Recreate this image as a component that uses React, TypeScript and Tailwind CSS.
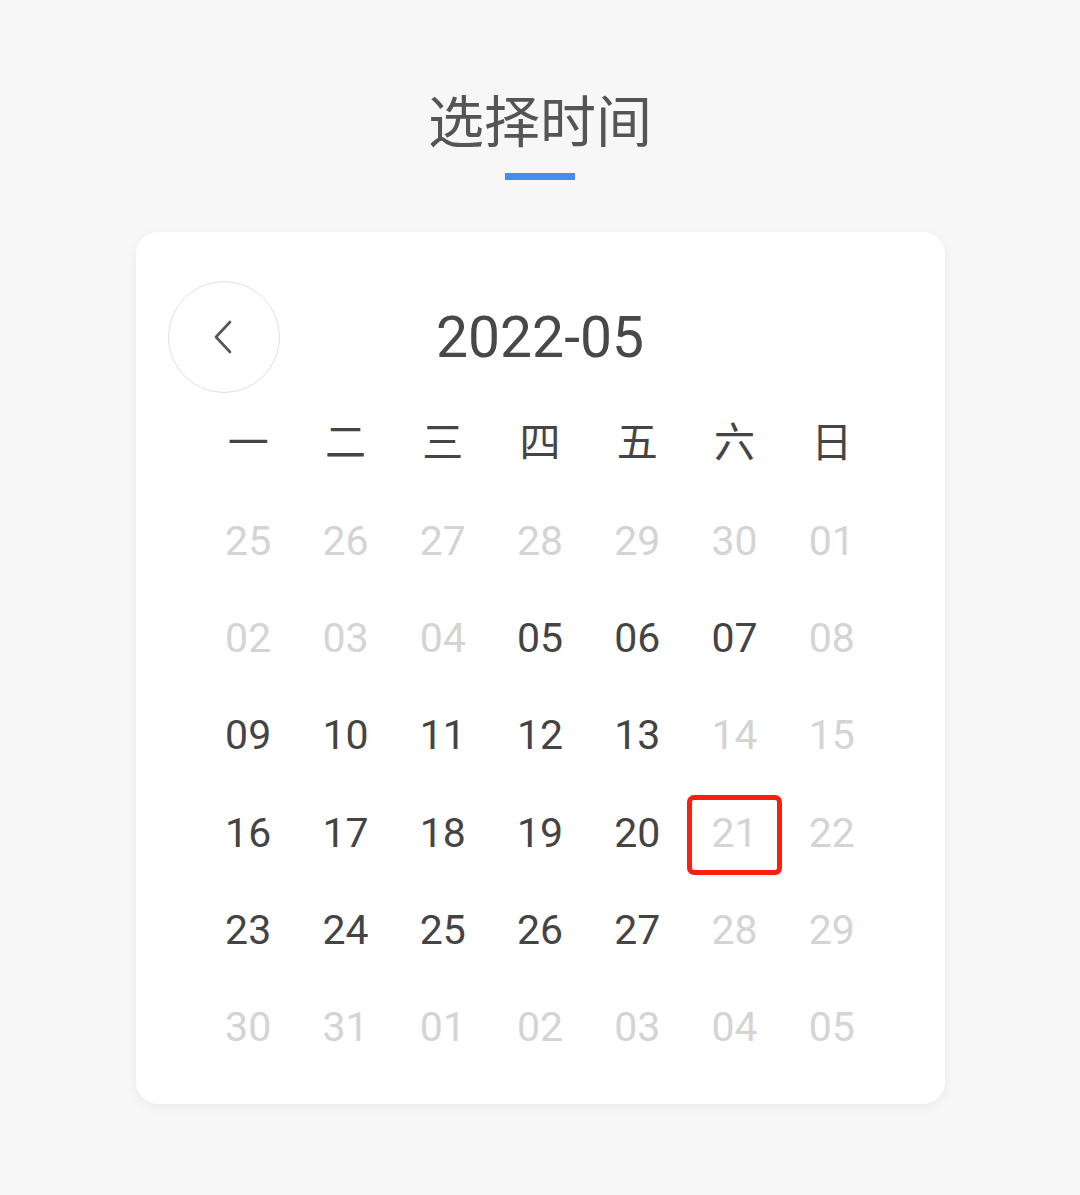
import React from "react";

type Day = { label: string; active: boolean; marked?: boolean };

const weekdays = ["一", "二", "三", "四", "五", "六", "日"];

// which days of the month are selectable (dark)
const activeDays = new Set([5, 6, 7, 9, 10, 11, 12, 13, 16, 17, 18, 19, 20, 23, 24, 25, 26, 27]);

const buildDays = (): Day[] => {
  const days: Day[] = [];
  [25, 26, 27, 28, 29, 30].forEach((d) => days.push({ label: String(d), active: false }));
  for (let d = 1; d <= 31; d++) {
    days.push({
      label: String(d).padStart(2, "0"),
      active: activeDays.has(d),
      marked: d === 21,
    });
  }
  [1, 2, 3, 4, 5].forEach((d) => days.push({ label: String(d).padStart(2, "0"), active: false }));
  return days;
};

const ChevronLeft = () => (
  <svg width="20" height="34" viewBox="0 0 20 34" fill="none">
    <path d="M17 2 L3 17 L17 32" stroke="#555555" strokeWidth="2.6" strokeLinecap="round" strokeLinejoin="round" />
  </svg>
);

export default function App() {
  const days = buildDays();

  return (
    <div className="min-h-[1195px] w-full bg-[#f7f7f7] flex flex-col items-center font-['Roboto','Noto_Sans_CJK_SC',sans-serif]">
      {/* Title */}
      <h1 className="mt-[88px] h-[60px] leading-[60px] text-[56px] text-[#555555] font-normal font-['Noto_Sans_CJK_SC',sans-serif]">
        选择时间
      </h1>
      <div className="mt-[25px] w-[70px] h-[7px] bg-[#3f8ff0]" />

      {/* Calendar card */}
      <div className="mt-[52px] w-[809px] h-[872px] bg-white rounded-[22px] shadow-[0_3px_12px_rgba(0,0,0,0.06)] pt-[49px]">
        <div className="grid grid-cols-[112px_1fr_112px] items-center px-[32px]">
          <button className="w-[112px] h-[112px] rounded-full border-[1.5px] border-[#e0e0e0] flex items-center justify-center pr-[2px]">
            <ChevronLeft />
          </button>
          <div className="text-center text-[57px] leading-none text-[#484848] font-['Roboto',sans-serif]">2022-05</div>
          <div />
        </div>

        <div className="w-[681px] mx-auto mt-[1px] grid grid-cols-7 auto-rows-[97.3px]">
          {weekdays.map((w) => (
            <div
              key={w}
              className="flex items-center justify-center pb-[5px] text-[41px] text-[#454545] font-['Noto_Sans_CJK_SC',sans-serif]"
            >
              {w}
            </div>
          ))}
          {days.map((d, i) => (
            <div
              key={i}
              className={`relative flex items-center justify-center pt-[3px] text-[41px] font-['Roboto',sans-serif] ${
                d.active ? "text-[#444444]" : "text-[#d4d4d4]"
              }`}
            >
              {d.label}
              {d.marked && (
                <span className="absolute left-[1px] right-[1px] top-[12px] bottom-[5px] border-[5px] border-[#fb1f10] rounded-[7px]" />
              )}
            </div>
          ))}
        </div>
      </div>
    </div>
  );
}
